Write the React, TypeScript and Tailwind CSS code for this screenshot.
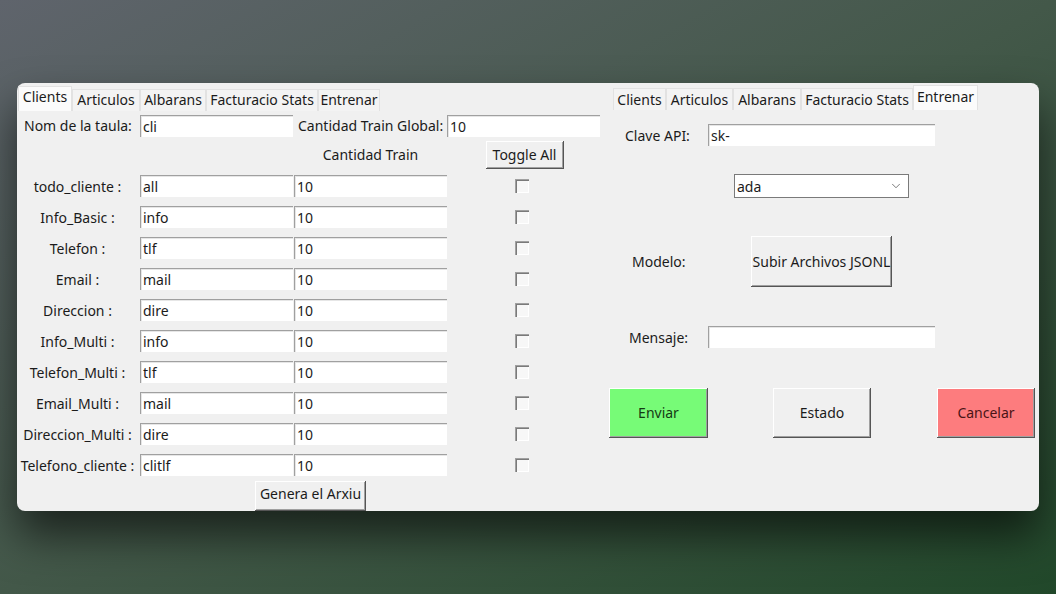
import React from "react";
import { ChevronDown } from "lucide-react";

const leftTabs = [
  { name: "Clients", w: "w-[54px]", active: true },
  { name: "Articulos", w: "w-[68px]" },
  { name: "Albarans", w: "w-[66px]" },
  { name: "Facturacio Stats", w: "w-[112px]" },
  { name: "Entrenar", w: "w-[62px]" },
];

const rightTabs = [
  { name: "Clients", w: "w-[53px]" },
  { name: "Articulos", w: "w-[67px]" },
  { name: "Albarans", w: "w-[68px]" },
  { name: "Facturacio Stats", w: "w-[112px]" },
  { name: "Entrenar", w: "w-[65px]", active: true },
];

const rows = [
  ["todo_cliente :", "all"],
  ["Info_Basic :", "info"],
  ["Telefon :", "tlf"],
  ["Email :", "mail"],
  ["Direccion :", "dire"],
  ["Info_Multi :", "info"],
  ["Telefon_Multi :", "tlf"],
  ["Email_Multi :", "mail"],
  ["Direccion_Multi :", "dire"],
  ["Telefono_cliente :", "clitlf"],
];

const sunken =
  "bg-white shadow-[inset_1px_1px_#a0a0a0,inset_2px_2px_#e6e6e6] pl-[3px] pt-[2px] flex items-center leading-none";
const raised =
  "shadow-[inset_-1px_-1px_#555,inset_1px_1px_#fff,inset_-2px_-2px_#a0a0a0] flex items-center justify-center leading-none";

function Tab({ name, w, active }: { name: string; w: string; active?: boolean }) {
  return (
    <div
      className={`${w} flex items-center justify-center border-t border-l border-r border-[#e2e2e2] ${
        active ? "h-[25px] pb-[4px] bg-[#fbfbfb]" : "h-[22px] pb-[1px] bg-[#f3f3f3]"
      }`}
    >
      {name}
    </div>
  );
}

function Field({ value, w }: { value: string; w: string }) {
  return <div className={`${w} h-[22px] ${sunken}`}>{value}</div>;
}

export default function App() {
  return (
    <div
      className="w-[1056px] h-[594px] overflow-hidden bg-gradient-to-br from-[#5f646c] via-[#435849] to-[#21482a] pt-[83px] pl-[17px] text-[14px] text-[#1b1b1b]"
      style={{ fontFamily: '"Noto Sans", "Open Sans", sans-serif' }}
    >
      <div className="w-[1022px] h-[428px] bg-[#f0f0f0] rounded-[8px] overflow-hidden flex shadow-[0_24px_44px_rgba(0,0,0,0.6)]">
        {/* left panel */}
        <div className="w-[592px] flex flex-col">
          <div className="h-[29px] flex items-end pl-[1px]">
            {leftTabs.map((t) => (
              <Tab key={t.name} {...t} />
            ))}
          </div>

          <div className="flex items-center mt-[4px] h-[22px]">
            <div className="w-[123px] pl-[7px]">Nom de la taula:</div>
            <Field value="cli" w="w-[153px]" />
            <div className="w-[154px] pl-[5px] whitespace-nowrap">Cantidad Train Global:</div>
            <Field value="10" w="w-[153px]" />
          </div>

          <div className="flex items-center mt-[4px] h-[28px]">
            <div className="w-[277px]" />
            <div className="w-[153px] text-center">Cantidad Train</div>
            <div className="w-[153px] flex justify-center">
              <div className={`${raised} w-[78px] h-[28px] bg-[#f0f0f0] ml-[2px]`}>Toggle All</div>
            </div>
          </div>

          <div className="flex flex-col gap-[9px] mt-[6px]">
            {rows.map(([label, val]) => (
              <div key={label} className="flex items-center h-[22px]">
                <div className="w-[121px] text-center whitespace-nowrap pt-[2px]">{label}</div>
                <Field value={val} w="w-[153px] ml-[2px]" />
                <Field value="10" w="w-[153px] ml-[1px]" />
                <div className="w-[153px] flex justify-center">
                  <div className="w-[14px] h-[14px] bg-[#f7f7f7] shadow-[inset_1px_1px_#a0a0a0,inset_2px_2px_#7a7a7a,inset_-1px_-1px_#fff] ml-[-4px]" />
                </div>
              </div>
            ))}
          </div>

          <div className={`${raised} mt-[5px] ml-[238px] w-[111px] h-[32px] pb-[3px] bg-[#f0f0f0]`}>
            Genera el Arxiu
          </div>
        </div>

        {/* right panel */}
        <div className="flex-1 flex flex-col">
          <div className="h-[27px] flex items-end pl-[4px]">
            {rightTabs.map((t) => (
              <Tab key={t.name} {...t} />
            ))}
          </div>

          <div className="flex items-center mt-[14px] h-[22px]">
            <div className="w-[99px] pl-[16px]">Clave API:</div>
            <Field value="sk-" w="w-[227px]" />
          </div>

          <div className="mt-[28px] ml-[125px] w-[175px] h-[24px] bg-white border border-[#7a7a7a] flex items-center justify-between pl-[2px] pr-[5px]">
            <span>ada</span>
            <ChevronDown size={14} strokeWidth={1.2} className="text-[#444]" />
          </div>

          <div className="flex items-center mt-[38px] h-[51px]">
            <div className="w-[142px] pl-[23px]">Modelo:</div>
            <div className={`${raised} w-[141px] h-[51px] bg-[#f0f0f0] whitespace-nowrap`}>
              Subir Archivos JSONL
            </div>
          </div>

          <div className="flex items-center mt-[39px] h-[22px]">
            <div className="w-[99px] pl-[20px]">Mensaje:</div>
            <Field value="" w="w-[227px]" />
          </div>

          <div className="flex items-center mt-[40px] h-[50px]">
            <div className={`${raised} w-[99px] h-[50px] bg-[#77fb77] text-[#143a14]`}>Enviar</div>
            <div className={`${raised} w-[98px] h-[50px] bg-[#f0f0f0] ml-[65px]`}>Estado</div>
            <div className={`${raised} w-[98px] h-[50px] bg-[#fd7c7e] text-[#4a1416] ml-[66px]`}>Cancelar</div>
          </div>
        </div>
      </div>
    </div>
  );
}
